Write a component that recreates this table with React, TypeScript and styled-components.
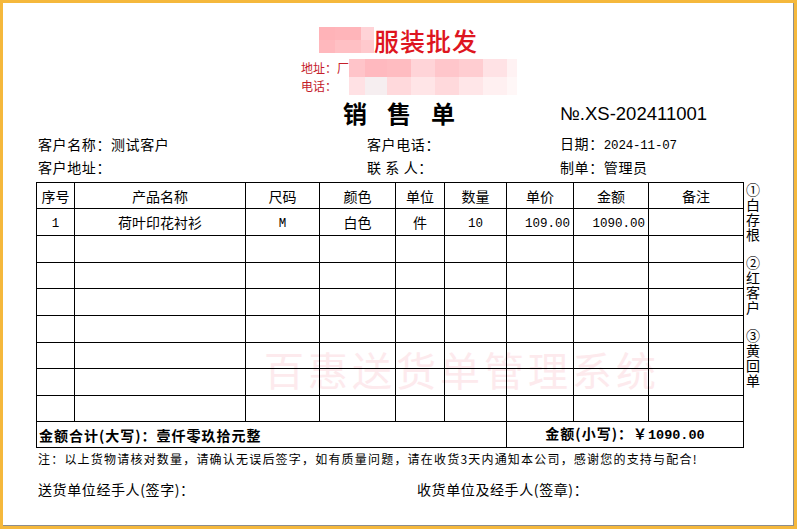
import React from "react";
import styled, { createGlobalStyle } from "styled-components";

const GlobalStyle = createGlobalStyle`
  html, body { margin: 0; padding: 0; background: #fff; }
  body { font-family: "Noto Sans CJK SC", "Noto Sans", sans-serif; color: #000; }
  * { box-sizing: border-box; }
`;

const CJK = `"Noto Sans CJK SC", "Noto Sans", sans-serif`;
const MONO = `"Liberation Mono", "Noto Sans CJK SC", monospace`;

const Page = styled.div`
  width: 797px;
  height: 529px;
  border: 3px solid #f5b83c;
  box-shadow: inset -1px -1px 0 #8d8d8d;
  background: #fff;
  display: flex;
  flex-direction: column;
  font-family: ${CJK};
  overflow: hidden;
`;

const Header = styled.header`
  padding-top: 24px;
  display: flex;
  flex-direction: column;
`;

const CompanyRow = styled.div`
  display: flex;
  justify-content: center;
  align-items: center;
  height: 26px;
`;

const CompanyName = styled.span`
  font-size: 25px;
  line-height: 26px;
  color: #de1520;
  font-weight: 500;
  letter-spacing: 1px;
`;

const Mosaic = styled.span`
  display: inline-flex;
  flex-direction: column;
`;

const MosaicRow = styled.span`
  display: flex;
`;

const Tile = styled.span<{ $w: number; $h: number; $c: string }>`
  display: block;
  width: ${(p) => p.$w}px;
  height: ${(p) => p.$h}px;
  background: ${(p) => p.$c};
`;

const ContactBlock = styled.div`
  margin-top: 6px;
  margin-left: 298px;
  display: flex;
  flex-direction: column;
`;

const ContactLine = styled.div`
  display: flex;
  align-items: center;
  height: 18px;
`;

const ContactLabel = styled.span`
  display: block;
  font-size: 12px;
  line-height: 18px;
  color: #c4202a;
  min-width: 48px;
  flex: none;
  white-space: nowrap;
`;

const Body = styled.main`
  padding-left: 33px;
  display: flex;
  flex-direction: column;
`;

const InfoGrid = styled.div`
  margin-top: 2px;
  padding-left: 2px;
  display: grid;
  grid-template-columns: 329px 193px 1fr;
  grid-template-rows: 36px 23px 23px;
  align-items: center;
`;

const DocTitle = styled.div`
  grid-column: 1 / 3;
  justify-self: end;
  align-self: start;
  margin-right: 85px;
  font-size: 24px;
  line-height: 32px;
  font-weight: 700;
  letter-spacing: 20px;
`;

const DocNo = styled.div`
  align-self: start;
  font-family: "Liberation Sans", Arial, sans-serif;
  font-size: 18.5px;
  line-height: 32px;
  padding-top: 1px;
`;

const Field = styled.div`
  font-size: 14px;
  line-height: 23px;
  letter-spacing: 0.6px;
  white-space: pre;
`;

const Mono = styled.span`
  font-family: ${MONO};
  font-size: 12.5px;
  letter-spacing: -0.2px;
`;

const TableArea = styled.div`
  margin-top: 3px;
  display: flex;
  align-items: flex-start;
`;

const TableWrap = styled.div`
  position: relative;
  width: 708px;
`;

const Watermark = styled.div`
  position: absolute;
  left: 228px;
  top: 163px;
  font-size: 40px;
  line-height: 48px;
  letter-spacing: 4px;
  color: #fdeaed;
  white-space: nowrap;
  z-index: 0;
  pointer-events: none;
`;

const Sheet = styled.table`
  position: relative;
  z-index: 1;
  width: 708px;
  border-collapse: collapse;
  table-layout: fixed;
  background: transparent;
`;

const Row = styled.tr<{ $h: number }>`
  height: ${(p) => p.$h}px;
`;

const Cell = styled.td<{ $align?: "left" | "center" | "right"; $bold?: boolean }>`
  border: 1px solid #000;
  padding: 0 ${(p) => (p.$align === "right" ? "3px" : p.$align === "left" ? "2px" : "0")};
  font-size: 14px;
  line-height: 18px;
  text-align: ${(p) => p.$align ?? "center"};
  font-weight: ${(p) => (p.$bold ? 700 : 400)};
  letter-spacing: ${(p) => (p.$bold ? "1px" : "0")};
  white-space: nowrap;
  overflow: hidden;
`;

const HeadCell = styled.th`
  border: 1px solid #000;
  padding: 0;
  font-size: 14px;
  line-height: 18px;
  font-weight: 400;
  text-align: center;
  white-space: nowrap;
`;

const CellMono = styled.span`
  font-family: ${MONO};
  font-size: 12.5px;
`;

const BoldMono = styled.span`
  font-family: ${MONO};
  font-size: 13.5px;
  font-weight: 700;
  letter-spacing: 0;
`;

const CopyLabels = styled.div`
  margin-left: 1px;
  padding-top: 1px;
  display: flex;
  flex-direction: column;
  gap: 13px;
`;

const CopyGroup = styled.div`
  writing-mode: vertical-rl;
  text-orientation: upright;
  font-size: 14px;
  line-height: 16px;
  letter-spacing: 1px;
  height: 60px;
  white-space: nowrap;
`;

const Note = styled.div`
  margin-top: 3px;
  padding-left: 2px;
  font-size: 12px;
  line-height: 16px;
  letter-spacing: 1.2px;
  white-space: nowrap;
`;

const SignRow = styled.div`
  margin-top: 14px;
  padding-left: 2px;
  display: grid;
  grid-template-columns: 379px 1fr;
  font-size: 14px;
  line-height: 16px;
  letter-spacing: 0.6px;
`;

type T = [number, string];

const topMosaic: T[][] = [
  [[16, "#ffb3b8"], [26, "#ffb5ba"], [13, "#ffd3d7"]],
  [[16, "#ffb8bd"], [26, "#ffc0c4"], [13, "#ffc9cd"]],
];
const addrMosaic: T[] = [
  [16, "#ffc4c9"], [22, "#ffb9bf"], [24, "#ffbcc1"], [24, "#ffd4d8"],
  [24, "#ffc6cb"], [24, "#ffcdd1"], [24, "#ffe2e5"], [10, "#fff2f3"],
];
const phoneMosaic: T[] = [
  [16, "#ffe1e4"], [22, "#f6eef0"], [24, "#ffd9dc"], [24, "#ffe5e7"],
  [24, "#ffd9dc"], [24, "#ffe6e8"], [24, "#fff0f1"], [10, "#fff7f7"],
];

const cols = [38, 171, 74, 76, 49, 62, 67, 75, 95];
const heads = ["序号", "产品名称", "尺码", "颜色", "单位", "数量", "单价", "金额", "备注"];
const emptyHeights = [27, 26, 27, 27, 26, 27, 26];

const copies = ["①白存根", "②红客户", "③黄回单"];

export default function App() {
  return (
    <>
      <GlobalStyle />
      <Page>
        <Header>
          <CompanyRow>
            <Mosaic>
              {topMosaic.map((r, i) => (
                <MosaicRow key={i}>
                  {r.map(([w, c], j) => (
                    <Tile key={j} $w={w} $h={13} $c={c} />
                  ))}
                </MosaicRow>
              ))}
            </Mosaic>
            <CompanyName>服装批发</CompanyName>
          </CompanyRow>
          <ContactBlock>
            <ContactLine>
              <ContactLabel>地址：厂</ContactLabel>
              <MosaicRow>
                {addrMosaic.map(([w, c], j) => (
                  <Tile key={j} $w={w} $h={18} $c={c} />
                ))}
              </MosaicRow>
            </ContactLine>
            <ContactLine>
              <ContactLabel>电话：</ContactLabel>
              <MosaicRow>
                {phoneMosaic.map(([w, c], j) => (
                  <Tile key={j} $w={w} $h={18} $c={c} />
                ))}
              </MosaicRow>
            </ContactLine>
          </ContactBlock>
        </Header>
        <Body>
          <InfoGrid>
            <DocTitle>销售单</DocTitle>
            <DocNo>№.XS-202411001</DocNo>
            <Field>客户名称：测试客户</Field>
            <Field>客户电话：</Field>
            <Field>
              日期：<Mono>2024-11-07</Mono>
            </Field>
            <Field>客户地址：</Field>
            <Field>联 系 人：</Field>
            <Field>制单：管理员</Field>
          </InfoGrid>
          <TableArea>
            <TableWrap>
              <Watermark>百惠送货单管理系统</Watermark>
              <Sheet>
                <colgroup>
                  {cols.map((w, i) => (
                    <col key={i} style={{ width: w }} />
                  ))}
                </colgroup>
                <thead>
                  <Row $h={26}>
                    {heads.map((h) => (
                      <HeadCell key={h}>{h}</HeadCell>
                    ))}
                  </Row>
                </thead>
                <tbody>
                  <Row $h={27}>
                    <Cell><CellMono>1</CellMono></Cell>
                    <Cell>荷叶印花衬衫</Cell>
                    <Cell><CellMono>M</CellMono></Cell>
                    <Cell>白色</Cell>
                    <Cell>件</Cell>
                    <Cell><CellMono>10</CellMono></Cell>
                    <Cell $align="right"><CellMono>109.00</CellMono></Cell>
                    <Cell $align="right"><CellMono>1090.00</CellMono></Cell>
                    <Cell />
                  </Row>
                  {emptyHeights.map((h, i) => (
                    <Row key={i} $h={h}>
                      {cols.map((_, j) => (
                        <Cell key={j} />
                      ))}
                    </Row>
                  ))}
                  <Row $h={26}>
                    <Cell colSpan={6} $align="left" $bold>
                      金额合计(大写)：壹仟零玖拾元整
                    </Cell>
                    <Cell colSpan={3} $bold>
                      金额(小写)：￥<BoldMono>1090.00</BoldMono>
                    </Cell>
                  </Row>
                </tbody>
              </Sheet>
            </TableWrap>
            <CopyLabels>
              {copies.map((g) => (
                <CopyGroup key={g}>{g}</CopyGroup>
              ))}
            </CopyLabels>
          </TableArea>
          <Note>
            注：以上货物请核对数量，请确认无误后签字，如有质量问题，请在收货3天内通知本公司，感谢您的支持与配合!
          </Note>
          <SignRow>
            <span>送货单位经手人(签字)：</span>
            <span>收货单位及经手人(签章)：</span>
          </SignRow>
        </Body>
      </Page>
    </>
  );
}
